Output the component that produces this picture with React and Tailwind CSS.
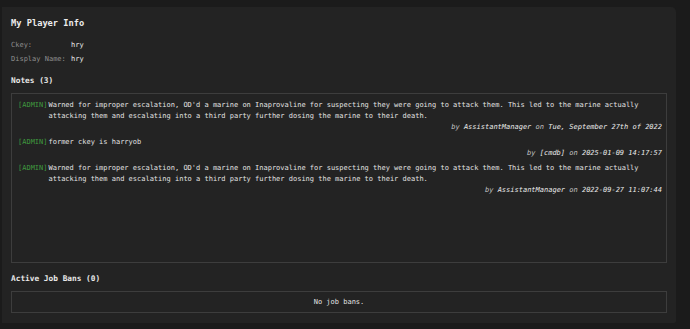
import React from "react";

const notes = [
  {
    text: "Warned for improper escalation, OD'd a marine on Inaprovaline for suspecting they were going to attack them. This led to the marine actually attacking them and escalating into a third party further dosing the marine to their death.",
    by: "AssistantManager",
    on: "Tue, September 27th of 2022",
  },
  { text: "former ckey is harryob", by: "[cmdb]", on: "2025-01-09 14:17:57" },
  {
    text: "Warned for improper escalation, OD'd a marine on Inaprovaline for suspecting they were going to attack them. This led to the marine actually attacking them and escalating into a third party further dosing the marine to their death.",
    by: "AssistantManager",
    on: "2022-09-27 11:07:44",
  },
];

export default function App() {
  return (
    <div
      className="w-[690px] h-[329px] bg-[#1b1b1b] overflow-hidden pt-[7px] pl-[2px]"
      style={{ fontFamily: '"DejaVu Sans Mono", "Liberation Mono", monospace' }}
    >
      <div className="w-[674px] h-[316px] bg-[#232323] rounded-tr-[5px] rounded-br-[2px] pl-[9px] pr-[9px] pt-[10px] flex flex-col">
        <div className="text-[8.7px] leading-[12px] text-[#ececec] font-bold">My Player Info</div>
        <div className="mt-[9px] flex flex-col text-[7px] leading-[14px]">
          <div className="flex">
            <span className="w-[60px] text-[#8e8e8e]">Ckey:</span>
            <span className="text-[#ececec]">hry</span>
          </div>
          <div className="flex">
            <span className="w-[60px] text-[#8e8e8e]">Display Name:</span>
            <span className="text-[#ececec]">hry</span>
          </div>
        </div>
        <div className="mt-[9px] text-[7.8px] leading-[12px] text-[#e8e8e8] font-bold">Notes (3)</div>
        <div className="mt-[6px] h-[170px] border border-[#3d3d3d] pt-[6px] pl-[6px] pr-[4px] flex flex-col gap-[5px]">
          {notes.map((n, i) => (
            <div key={i} className="flex flex-col">
              <div className="flex text-[7px] leading-[11px]">
                <span className="text-[#3f9a3f] shrink-0 mr-[1px]">[ADMIN]</span>
                <span className="text-[#e2e2e2]">{n.text}</span>
              </div>
              <div className="text-right text-[7px] leading-[10px] italic">
                <span className="text-[#c4c4c4]">by </span>
                <span className="text-[#ececec]">{n.by}</span>
                <span className="text-[#c4c4c4]"> on </span>
                <span className="text-[#ececec]">{n.on}</span>
              </div>
            </div>
          ))}
        </div>
        <div className="mt-[10px] text-[7.8px] leading-[12px] text-[#e8e8e8] font-bold">Active Job Bans (0)</div>
        <div className="mt-[6px] h-[22px] border border-[#3d3d3d] flex items-center justify-center text-[7px] text-[#e2e2e2]">
          No job bans.
        </div>
      </div>
    </div>
  );
}
